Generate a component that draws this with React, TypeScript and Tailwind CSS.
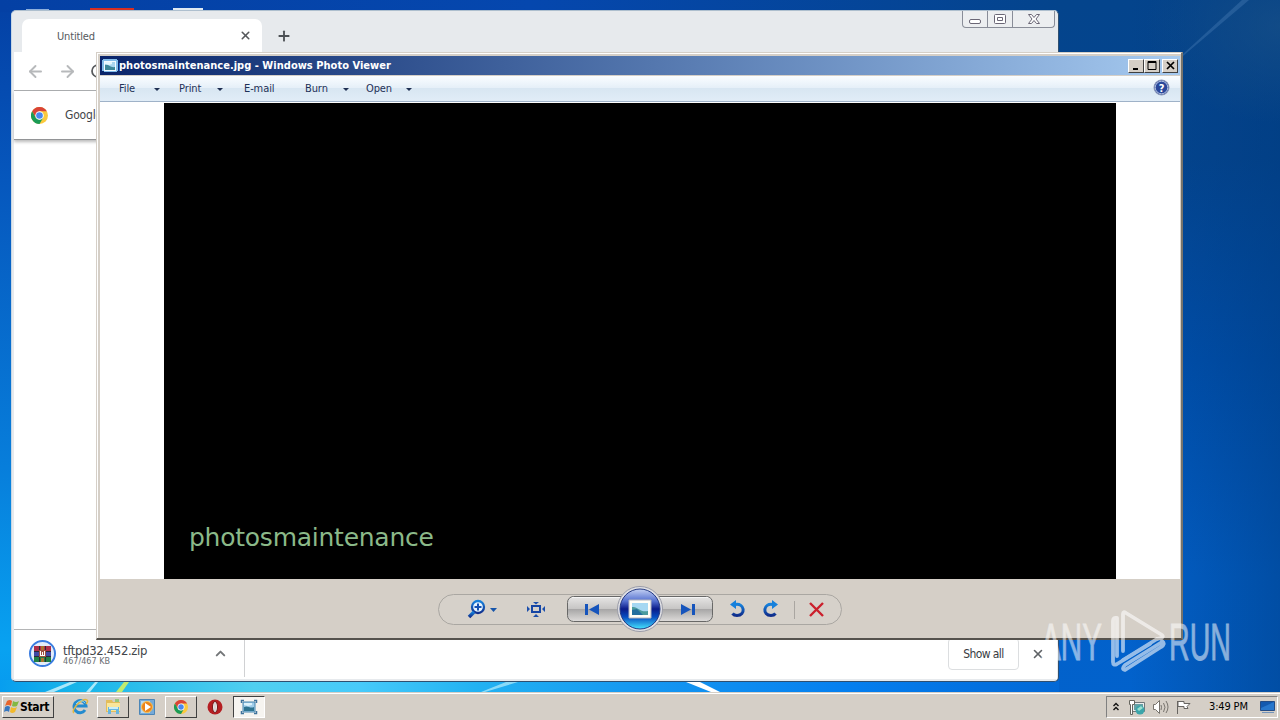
import type { ReactNode } from 'react';
import { ArrowLeft, ArrowRight, ChevronUp, Plus, RotateCw, X } from 'lucide-react';

const Caret = ({ className = '' }: { className?: string }) => (
    <svg className={className} width="6" height="3" viewBox="0 0 6 3" fill="#1e2f52">
        <path d="M0 0h6L3 3z" />
    </svg>
);

const ChromeLogo = ({ size }: { size: number }) => (
    <svg width={size} height={size} viewBox="0 0 24 24">
        <circle cx="12" cy="12" r="12" fill="#fbc93d" />
        <path d="M1.600 6A12 12 0 0 1 22.400 6H12L6.800 15z" fill="#d94437" />
        <path d="M1.600 6A12 12 0 0 0 12 24l5.200-9L12 18l-5.200-3z" fill="#1a9b56" />
        <circle cx="12" cy="12" r="6" fill="#fff" />
        <circle cx="12" cy="12" r="4.700" fill="#4a88ee" />
    </svg>
);

const PictureIcon = () => (
    <svg width="16" height="16" viewBox="0 0 16 16">
        <path d="M1 1h14v1h1v11h-1v1H2v-1H0V2h1z" fill="#82bce9" />
        <path d="M2 3h12v10H2z" fill="#f3fbff" />
        <path d="M3 4h10v8H3z" fill="#a9d5ee" />
        <path d="M3 7c4-1 5 3 10 2v3H3z" fill="#3d8799" />
        <path d="M3 4h7v2L7 7 3 6z" fill="#e4f6fe" />
    </svg>
);

const ViewerTaskIcon = () => (
    <svg width="18" height="16" viewBox="0 0 18 16">
        <path d="M3 3h12v10H3z" fill="#9fcdea" stroke="#4b86ad" />
        <path d="M4 8c4-2 6 2 10 0v4H4z" fill="#2d7390" />
        <path d="M4 4h8v2L8 7 4 6z" fill="#dcf2fc" />
        <path d="M1.500 4V1.500H4M14 1.500h2.500V4M16.500 12v2.500H14M4 14.500H1.500V12" fill="none" stroke="#3f729b" strokeWidth="1.500" />
    </svg>
);

const Wallpaper = () => (
    <svg className="absolute inset-0" width="1280" height="720" viewBox="0 0 1280 720">
        <defs>
            <linearGradient id="left" x1="0" y1="0" x2="0" y2="1">
                <stop offset="0" stopColor="#0440a4" />
                <stop offset=".25" stopColor="#0657bd" />
                <stop offset=".65" stopColor="#077edb" />
                <stop offset=".9" stopColor="#08a2f1" />
                <stop offset="1" stopColor="#0695ed" />
            </linearGradient>
            <linearGradient id="right" x1="0" y1="0" x2="0" y2="1">
                <stop offset="0" stopColor="#04448c" />
                <stop offset=".22" stopColor="#04458f" />
                <stop offset=".5" stopColor="#0050ae" />
                <stop offset=".8" stopColor="#0261cb" />
                <stop offset="1" stopColor="#0262cc" />
            </linearGradient>
            <linearGradient id="top">
                <stop offset="0" stopColor="#0440a4" />
                <stop offset=".5" stopColor="#0547ae" />
                <stop offset="1" stopColor="#04448c" />
            </linearGradient>
            <linearGradient id="bottom">
                <stop offset="0" stopColor="#079eef" />
                <stop offset=".07" stopColor="#17b4e9" />
                <stop offset=".24" stopColor="#50cff0" />
                <stop offset=".34" stopColor="#47cafa" />
                <stop offset=".45" stopColor="#22b2f2" />
                <stop offset=".6" stopColor="#1698f1" />
                <stop offset=".8" stopColor="#057fef" />
                <stop offset="1" stopColor="#0268d6" />
            </linearGradient>
            <linearGradient id="shade">
                <stop offset="0" stopColor="#003a7d" stopOpacity="0" />
                <stop offset="1" stopColor="#003a7d" stopOpacity=".5" />
            </linearGradient>
            <radialGradient id="corner" cx="1" cy="0.2" r=".75">
                <stop offset="0" stopColor="#185088" stopOpacity=".7" />
                <stop offset="1" stopColor="#185088" stopOpacity="0" />
            </radialGradient>
        </defs>
        <path d="M0 0h640v720H0z" fill="url(#left)" />
        <path d="M640 0h640v720H640z" fill="url(#right)" />
        <path d="M0 0h1059v12H0z" fill="url(#top)" />
        <path d="M0 680h1059v12H0z" fill="url(#bottom)" />
        <path d="M1130 0h150v692h-150z" fill="url(#shade)" />
        <path d="M1100 0h180v130h-180z" fill="url(#corner)" />
        <path d="M1183 54 1242 0h7l-66 56z" fill="#6a9bd0" opacity=".25" />
        <path d="M45 692 70 682h7l-23 10zM86 692l9-10h3l-8 10z" fill="#dcf9ff" opacity=".75" />
        <path d="m116 692 8-10h5l-7 10z" fill="#bfeb70" />
        <path d="m481 692 25-10h12l-33 10z" fill="#b7edfb" opacity=".7" />
        <path d="m686 682 25 10h9l-20-10z" fill="#fff" />
        <path d="M26 9h23v2H26z" fill="#8fb0dc" />
        <path d="M173 8h30v3h-30z" fill="#dfe9f2" />
        <path d="M90 8h44v3H90z" fill="#d82f22" />
    </svg>
);

const ChromeWindow = () => (
    <div className="absolute left-[11px] top-[10px] isolate flex h-[672px] w-[1048px] flex-col overflow-hidden rounded-[5px] border border-[#2f4f70] border-l-[#c5d6e5] border-t-[#aebfce] bg-[#e7eaed] px-px pb-[2px] text-[#424549]">
        <div className="flex h-[41px] shrink-0 items-start">
            <div className="ml-[9px] mt-2 flex h-[33px] w-[240px] items-center rounded-t-[7px] bg-white pl-[35px] pr-[10px]">
                <span className="flex-1 pt-[3px] text-[11px] tracking-[-0.15px] text-[#56595d]">Untitled</span>
                <X size={13} strokeWidth={2.8} color="#55585b" />
            </div>
            <Plus className="ml-[14px] mt-[17px]" size={16} strokeWidth={2.8} color="#4d5155" />
            <div className="ml-auto mr-[2px] flex h-[17px] w-[93px] rounded-b-[4px] border border-t-0 border-[#898d98] bg-[#eceef0]">
                <svg width="91" height="16" viewBox="0 0 91 16" fill="none" stroke="#6b6776">
                    <path d="M24.500 0v16M49.500 0v16" stroke="#898d98" />
                    <rect x="6.500" y="8.500" width="11" height="4" rx="1.500" fill="#fff" />
                    <rect x="31.500" y="3.500" width="11" height="9" rx="1" fill="#fff" />
                    <path d="M34.500 6.500h5v3h-5z" />
                    <path d="M65.500 3.500h3l2.500 3 2.500-3h3L73 8l3.500 4.500h-3L71 9.500l-2.500 3h-3L69 8z" fill="#fff" />
                </svg>
            </div>
        </div>
        <div className="ml-px flex h-[39px] shrink-0 items-center gap-[13px] border-b border-[#a9abad] bg-white pl-[12px]">
            <ArrowLeft size={19} strokeWidth={2.4} color="#b7b9bb" />
            <ArrowRight size={19} strokeWidth={2.4} color="#b7b9bb" />
            <RotateCw size={16} strokeWidth={2.6} color="#55585b" />
        </div>
        <div className="z-10 ml-px flex h-[49px] shrink-0 items-center border-b border-[#929496] bg-white pl-[17px] shadow-[0_2px_3px_#bbb]">
            <ChromeLogo size={17} />
            <span className="ml-[17px] text-[12px] tracking-[-0.2px]">Google Chrome isn't your default browser</span>
        </div>
        <div className="ml-px flex-1 bg-white" />
        <div className="ml-px flex h-[50px] shrink-0 items-center border-t border-[#b4b5b6] bg-white pb-[2px]">
            <div className="flex h-full w-[231px] items-center border-r border-[#d0d1d3] pl-[15px]">
                <div className="flex h-[27px] w-[27px] items-center justify-center rounded-full border-2 border-[#3b7de0] bg-[#e4edf9]">
                    <svg width="17" height="16" viewBox="0 0 17 16">
                        <path d="M0 0h17v5H0z" fill="#b02e47" />
                        <path d="M0 5h17v5H0z" fill="#4048a5" />
                        <path d="M0 10h17v6H0z" fill="#208044" />
                        <path d="M5 0h1v16H5zM11 0h1v16h-1zM0 5h17v1H0zM0 10h17v1H0z" fill="#292939" />
                        <path d="M5 4h7v7H5z" fill="#9d5141" />
                        <path d="M6 5h1v4h1V6h1v3h1V5h1v5H6z" fill="#fff" />
                        <path d="M7 0h3v4H7zM7 12h3v4H7z" fill="#a8742e" />
                    </svg>
                </div>
                <div className="ml-[7px] flex-1 whitespace-nowrap pt-[2px]">
                    <div className="text-[13px] leading-[13px] tracking-[-0.35px]">tftpd32.452.zip</div>
                    <div className="text-[9px] leading-[9px] text-[#696d71]">467/467 KB</div>
                </div>
                <ChevronUp className="mr-4" size={15} strokeWidth={3.2} color="#747779" />
            </div>
            <div className="ml-auto mr-[12px] flex h-[32px] w-[71px] items-center justify-center rounded-[4px] border border-[#dcdee0] text-[12px] tracking-[-0.6px] text-[#383b3f]">
                Show all
            </div>
            <X className="mr-[12px]" size={14} strokeWidth={2.8} color="#5f6266" />
        </div>
    </div>
);

const TitleButton = ({ children, className = '' }: { children: ReactNode; className?: string }) => (
    <div className={`flex h-[14px] w-4 items-center justify-center border border-b-[#404040] border-l-white border-r-[#404040] border-t-white bg-[#d5cfc7] ${className}`}>
        <svg width="14" height="12" viewBox="0 0 14 12" fill="none" stroke="#000">
            {children}
        </svg>
    </div>
);

const menus = [
    { label: 'File', width: 'w-[29px]', gap: 'mr-[19px]', caret: true },
    { label: 'Print', width: 'w-[32px]', gap: 'mr-[21px]', caret: true },
    { label: 'E-mail', width: 'w-[61px]', gap: '', caret: false },
    { label: 'Burn', width: 'w-[32px]', gap: 'mr-[17px]', caret: true },
    { label: 'Open', width: 'w-[34px]', gap: '', caret: true },
];

const PlayerControls = () => (
    <svg width="410" height="54" viewBox="0 0 410 54">
        <defs>
            <linearGradient id="btn" x1="0" y1="0" x2="0" y2="1">
                <stop offset="0" stopColor="#e7e6e5" />
                <stop offset=".48" stopColor="#c7c6c5" />
                <stop offset=".5" stopColor="#a6a5a5" />
                <stop offset="1" stopColor="#dedcda" />
            </linearGradient>
            <linearGradient id="orb" x1="0" y1="0" x2="0" y2="1">
                <stop offset="0" stopColor="#c4d1f3" />
                <stop offset=".3" stopColor="#5470d0" />
                <stop offset=".5" stopColor="#0a1b89" />
                <stop offset=".7" stopColor="#074dc1" />
                <stop offset="1" stopColor="#46e5ff" />
            </linearGradient>
            <linearGradient id="ink" x1="0" y1="0" x2="0" y2="1">
                <stop offset="0" stopColor="#1682dd" />
                <stop offset="1" stopColor="#102e8c" />
            </linearGradient>
        </defs>
        <rect x="3.500" y="12.500" width="403" height="30" rx="15" fill="#d6d1ca" stroke="#aaa7a2" />
        <rect x="132.500" y="14.500" width="145" height="25" rx="6" fill="url(#btn)" stroke="#686867" />
        <path d="M137 15.500h136" stroke="#f4f4f4" />
        <circle cx="205" cy="27" r="22.500" fill="#e1e1e5" stroke="#999ba7" />
        <circle cx="205" cy="27" r="20" fill="url(#orb)" stroke="#263b83" />
        <path d="M194 18h22v18h-22z" fill="#fffef7" stroke="#b4b6bd" />
        <path d="M197 21h16v12h-16z" fill="#a5d8f2" />
        <path d="M197 25c6-1 8 6 16 4v4h-16z" fill="#4b9c9d" />
        <path d="m197 28 5-1 6 6h-11z" fill="#236e9e" />
        <g fill="none" stroke="url(#ink)" strokeWidth="2.300">
            <circle cx="43" cy="25" r="6" fill="#e5f4ff" />
            <path d="m39 30-5 5" strokeWidth="3.500" />
        </g>
        <path d="M39.500 25h7M43 21.500v7" stroke="#1551b2" strokeWidth="2" />
        <path d="M55 26h7l-3.500 4z" fill="#1755aa" />
        <path d="M97 24h8v6h-8z" fill="none" stroke="#1746a4" strokeWidth="2" />
        <path d="M98 20h6l-3 2.500zM98 35h6l-3-3zM92 24v6l3-3zM110 24v6l-3-3z" fill="#1c4fac" />
        <path d="M150 22h3v11h-3zM164 22v11l-10-5.500zM246 22v11l10-5.500zM257 22h3v11h-3z" fill="#1554bc" />
        <g fill="none" stroke="url(#ink)" strokeWidth="3">
            <path d="M300 22.500c10-2 11 11 2 11q-3 0-4.500-2" />
            <path d="M338 22.500c-10-2-11 11-2 11q3 0 4.500-2" />
        </g>
        <path d="m295 22.500 6-4.500v9zM343 22.500l-6-4.500v9z" fill="#1681dc" />
        <path d="M359.500 19v18" stroke="#aaa6a1" />
        <path d="m375 21 13 13M388 21l-13 13" stroke="#cb202c" strokeWidth="2.400" />
    </svg>
);

const PhotoViewer = () => (
    <div className="absolute left-[96px] top-[52px] flex h-[588px] w-[1087px] flex-col border border-b-2 border-r-2 border-b-[#55524d] border-l-[#d5cfc7] border-r-[#77736b] border-t-[#d5cfc7] bg-[#d5cfc7] p-[2px] shadow-[inset_1px_1px_white]">
        <div className="ml-px mt-px flex h-[19px] w-[1080px] shrink-0 items-center bg-gradient-to-r from-[#0a246a] to-[#a6caf0] pl-0.5 pr-[2px]">
            <PictureIcon />
            <span className="ml-px flex-1 whitespace-nowrap pt-px text-[11px] font-bold tracking-[0.02px] text-white">photosmaintenance.jpg - Windows Photo Viewer</span>
            <TitleButton><path d="M4 9h5" strokeWidth="2" /></TitleButton>
            <TitleButton><path d="M3 1.500h8v8H3zM3 2.500h8" /></TitleButton>
            <TitleButton className="ml-[2px]"><path d="m4 2 7 7m0-7L4 9" strokeWidth="1.700" /></TitleButton>
        </div>
        <div className="ml-px mt-px flex h-[26px] w-[1080px] shrink-0 items-center border-b border-[#9fb2c8] bg-[linear-gradient(#fafdff,#e5eff8_48%,#d8e6f2_50%,#e1edf7)] pl-[19px] text-[11px] text-[#1e3157]">
            {menus.map((menu) => (
                <div key={menu.label} className={`flex items-center pt-px ${menu.gap}`}>
                    <span className={`whitespace-nowrap tracking-[-0.1px] ${menu.width}`}>{menu.label}</span>
                    {menu.caret && <Caret className="ml-[6px]" />}
                </div>
            ))}
            <svg className="mb-[2px] ml-auto mr-[10px]" width="17" height="17" viewBox="0 0 17 17">
                <circle cx="8.500" cy="8.500" r="7.500" fill="#29479a" stroke="#8b96b6" />
                <circle cx="8.500" cy="8.500" r="6.300" fill="none" stroke="#d7e1f4" strokeWidth=".8" />
                <text x="8.500" y="12.500" textAnchor="middle" fontSize="11" fontWeight="bold" fill="white">?</text>
            </svg>
        </div>
        <div className="ml-px flex h-[477px] w-[1080px] shrink-0 justify-center bg-white pt-px">
            <div className="flex w-[952px] items-end bg-black pb-[25px] pl-[25px]">
                <span className="font-['DejaVu_Sans'] text-[25px] leading-8 tracking-[-0.25px] text-[#8bb989]">photosmaintenance</span>
            </div>
        </div>
        <div className="flex flex-1 items-center justify-center pl-[2px] pt-[3px]">
            <PlayerControls />
        </div>
    </div>
);

const TaskButton = ({ children, active = false }: { children: ReactNode; active?: boolean }) => (
    <div className={`flex h-[22px] w-8 items-center justify-center border ${active ? 'border-b-white border-l-[#404040] border-r-white border-t-[#404040] bg-[#f6f4f0]' : 'border-b-[#404040] border-l-white border-r-[#404040] border-t-white bg-[#d5cfc7]'}`}>
        {children}
    </div>
);

const Taskbar = () => (
    <div className="absolute bottom-0 left-0 flex h-7 w-full items-center border-t border-[#d5cfc7] bg-[#d5cfc7] pl-0.5 pr-[2px] shadow-[inset_0_1px_white]">
        <div className="flex h-[22px] w-[52px] items-center border border-b-[#404040] border-l-white border-r-[#404040] border-t-white pl-px">
            <svg width="16" height="16" viewBox="0 0 16 16">
                <path d="M3 2q3-2 5 0L7 7Q4 5 1 7z" fill="#e8652b" />
                <path d="M9 2q3 2 6 0l-2 5q-3 1-5 0z" fill="#83b844" />
                <path d="M1 8q3-2 5 0l-1 5q-2-2-5 0z" fill="#3777bf" />
                <path d="M7 8q3 2 6 0l-2 5q-3 2-5 0z" fill="#f2b92c" />
            </svg>
            <span className="text-[12px] font-bold tracking-[-0.35px] text-black">Start</span>
        </div>
        <svg className="ml-[18px]" width="17" height="17" viewBox="0 0 17 17" fill="none">
            <path d="M13 12a6 6 0 1 1 1-4H4" stroke="#248bcf" strokeWidth="3" />
            <path d="M2 15C-2 12 11-1 15 2c1 1 0 3-1 4" stroke="#e1b742" strokeWidth="1.500" />
            <path d="M4 6q5-6 9-1" stroke="#89d8f6" />
        </svg>
        <div className="ml-2">
            <TaskButton>
                <svg width="17" height="17" viewBox="0 0 17 17">
                    <path d="M1 2h6l1 2h7v10H1z" fill="#e3bd5b" />
                    <path d="M2 5h13v8H2z" fill="#f9e69b" />
                    <path d="M10 1h4v3h-4z" fill="#94c77d" />
                    <path d="M3 9h11v7h-3v-4H6v4H3z" fill="#68b6df" />
                    <path d="M4 9h9v2H4z" fill="#c9eef9" />
                </svg>
            </TaskButton>
        </div>
        <svg className="ml-[10px]" width="16" height="16" viewBox="0 0 16 16">
            <path d="M.5.500h15v15H.5z" fill="#76aad8" stroke="#4c86b7" />
            <path d="M2 2h9v12H2z" fill="#b8d8ef" />
            <circle cx="8" cy="8" r="5.500" fill="#ed8419" stroke="#f6c35b" />
            <path d="m6 4 6 4-6 4z" fill="#fff" />
        </svg>
        <div className="ml-[10px]">
            <TaskButton><ChromeLogo size={14} /></TaskButton>
        </div>
        <svg className="ml-[10px]" width="16" height="16" viewBox="0 0 16 16">
            <ellipse cx="8" cy="8" rx="7.500" ry="7.500" fill="#b51e22" />
            <ellipse cx="8" cy="8" rx="2.500" ry="5.500" fill="#eee" stroke="#731518" />
            <path d="M8 3v10" stroke="#c8bebe" />
        </svg>
        <div className="ml-[10px]">
            <TaskButton active><ViewerTaskIcon /></TaskButton>
        </div>
        <div className="ml-auto flex h-[22px] w-[172px] items-center border border-b-white border-l-[#808080] border-r-white border-t-[#808080] text-[11px] text-black">
            <svg className="ml-[6px]" width="6" height="9" viewBox="0 0 6 9" fill="none" stroke="#111" strokeWidth="1.400">
                <path d="m.5 4 2.500-2.500L5.500 4M.5 8 3 5.500 5.500 8" />
            </svg>
            <svg className="ml-[10px]" width="16" height="16" viewBox="0 0 16 16">
                <path d="M3.500 3.500h12v9h-12z" fill="#eee" stroke="#70777a" />
                <path d="M5 5h9v6H5z" fill="#66a1a5" />
                <circle cx="11" cy="11" r="4.500" fill="#3ba5aa" />
                <path d="m8 10 4-3 2 2-4 3z" fill="#9ae0cf" />
                <path d="M.5 1.500h5v4h-2v10h-2v-10h-1z" fill="#fff" stroke="#66665f" />
            </svg>
            <svg className="ml-[7px]" width="17" height="16" viewBox="0 0 17 16" fill="none" stroke="#77736d">
                <path d="M1.500 5.500h2l4-4v13l-4-4h-2z" fill="#fff" />
                <path d="M9 6q1 2 0 5M11.500 4q3 4 0 9M14 2q4 6 0 12" />
            </svg>
            <svg className="ml-[6px]" width="17" height="16" viewBox="0 0 17 16" fill="#fff" stroke="#686561">
                <path d="M2.500 2v13M3 2.500h6v2h6l-3 3 1 2H9v-2H3z" />
            </svg>
            <span className="ml-[17px] whitespace-nowrap pt-px tracking-[-0.15px]">3:49 PM</span>
            <svg className="ml-auto mr-px" width="16" height="14" viewBox="0 0 16 14">
                <path d="M.5 1.500h14v9H.5z" fill="#1359af" stroke="#244c85" />
                <path d="m1 8 13-6v8H1z" fill="#2877cc" />
                <path d="M2 12h12v1H2z" fill="#7494ba" />
            </svg>
        </div>
    </div>
);

const Watermark = () => (
    <svg className="absolute left-[1036px] top-[596px]" width="220" height="88" viewBox="0 -8 220 88">
        <g fill="white" stroke="white" strokeWidth=".8" opacity=".53" fontFamily="Liberation Sans, sans-serif" fontSize="52">
            <text transform="translate(5 56) scale(.57 1)">ANY</text>
            <text transform="translate(133 56) scale(.55 1)">RUN</text>
        </g>
        <g fill="none" stroke="white" strokeWidth="3.800" strokeLinejoin="round" strokeLinecap="round" opacity=".58">
            <path d="M81 14q-4-1-4 3v41q0 4 4 2l33-20M81 14v38" />
            <path d="M87 47V10q0-3 3-1l36 22q2 2-1 3l-4 1" />
            <path d="M121 35 87 56M126 38 89 61q-4 4 0 5l36-23q5-3 1-6" />
        </g>
    </svg>
);

export default function App() {
    return (
        <div className="relative h-[720px] w-[1280px] overflow-hidden bg-[#0659bd] font-['DejaVu_Sans_Condensed','DejaVu_Sans',sans-serif]">
            <Wallpaper />
            <ChromeWindow />
            <PhotoViewer />
            <Taskbar />
            <Watermark />
        </div>
    );
}
